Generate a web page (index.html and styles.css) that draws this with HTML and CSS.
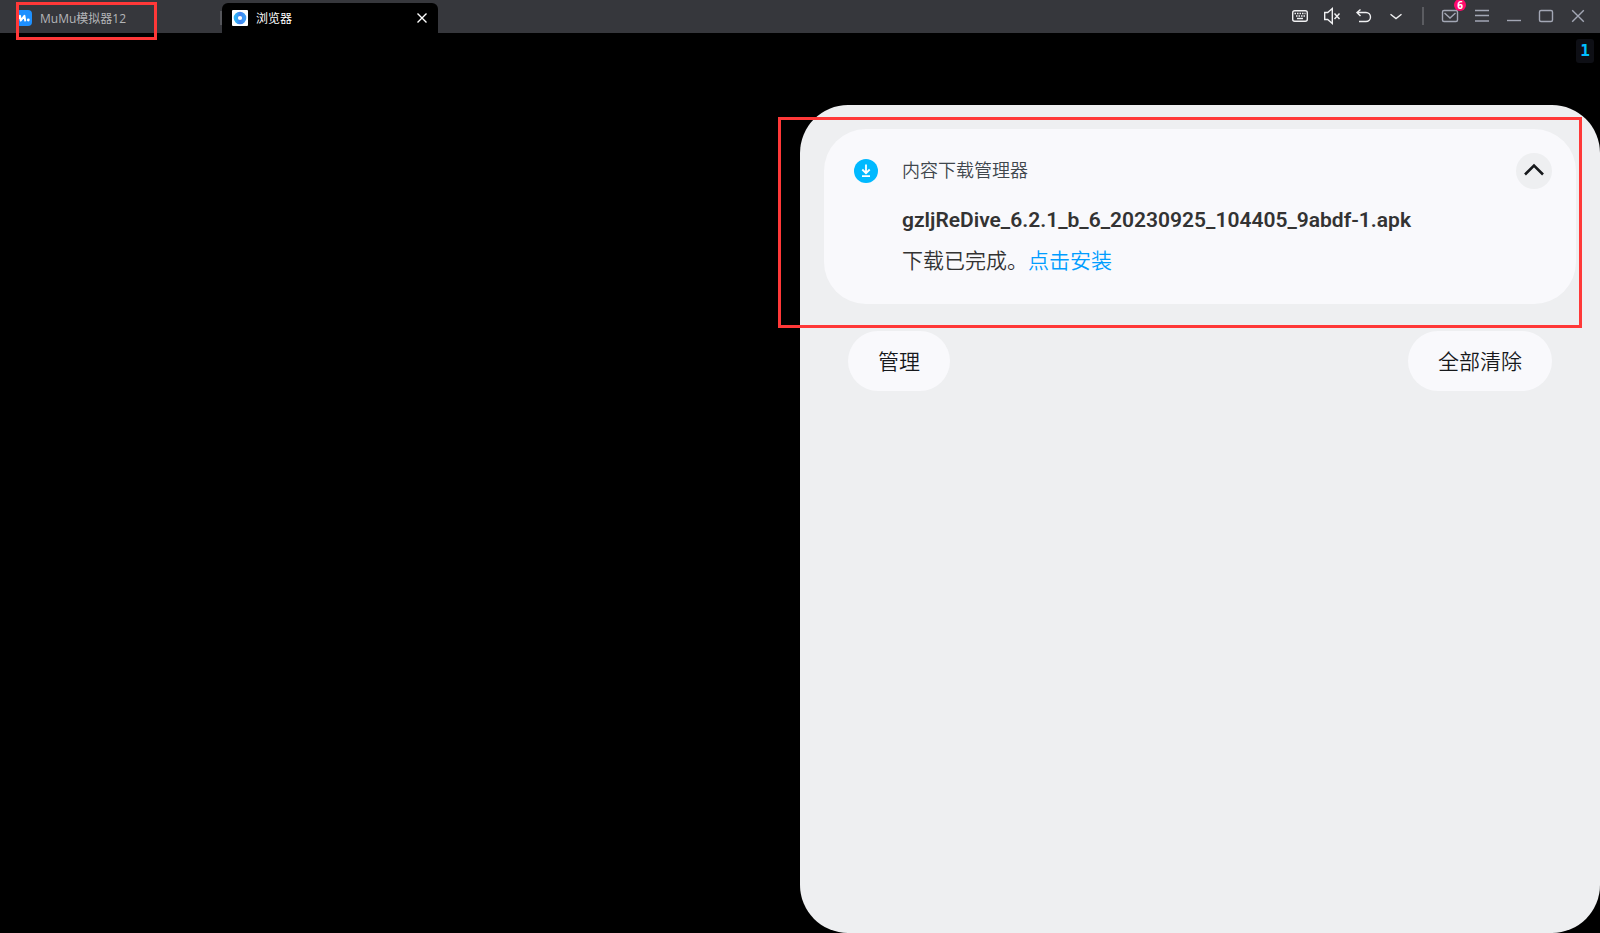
FILE: index.html
```html
<!DOCTYPE html>
<html lang="zh-CN">
<head>
  <meta charset="UTF-8">
  <meta name="viewport" content="width=device-width, initial-scale=1.0">
  <title>MuMu模拟器12</title>
  <link rel="stylesheet" href="styles.css">
</head>
<body>
  <header class="titlebar">
    <nav class="tabs">
      <a class="tab tab-home" href="#">
        <svg class="tab-icon" viewBox="0 0 16 16">
          <rect width="16" height="16" rx="4" fill="#1e90ff"/>
          <path d="M1 10.500 4 5.800l.8 4.700 3.600-4.700.8 4.700" fill="none" stroke="#fff" stroke-width="2" stroke-linejoin="round" stroke-linecap="round"/>
          <circle cx="12.300" cy="10" r="1.400" fill="#fff"/>
        </svg>
        <span>MuMu模拟器12</span>
      </a>
      <div class="tab tab-active">
        <svg class="tab-icon" viewBox="0 0 16 16">
          <defs>
            <linearGradient id="disc" x1="0" y1="0" x2="1" y2="0">
              <stop offset="0" stop-color="#2fb2f5"/>
              <stop offset=".5" stop-color="#4480ee"/>
              <stop offset="1" stop-color="#3f9cf5"/>
            </linearGradient>
          </defs>
          <rect width="16" height="16" rx="1" fill="#fff"/>
          <circle cx="8" cy="8" r="4.200" fill="none" stroke="url(#disc)" stroke-width="4.200"/>
        </svg>
        <span>浏览器</span>
        <button class="tab-close" aria-label="关闭标签">
          <svg viewBox="0 0 10 10"><path d="M.5.5l9 9M9.500.5l-9 9"/></svg>
        </button>
      </div>
    </nav>
    <div class="tools">
      <button class="tool" aria-label="键盘">
        <svg viewBox="0 0 32 32">
          <rect x="8.700" y="10.700" width="14.600" height="10.600" rx="2"/>
          <path d="M10.500 13.500h11M12 16h9" stroke-dasharray="1.500 1"/>
          <path d="M13 18.500h6"/>
        </svg>
      </button>
      <button class="tool" aria-label="静音">
        <svg viewBox="0 0 32 32">
          <path d="M8.700 12.500h3l4.600-4v15l-4.600-4h-3zM18.500 13.500l5 5.500M23.500 13.500l-5 5.500"/>
        </svg>
      </button>
      <button class="tool" aria-label="返回">
        <svg viewBox="0 0 32 32">
          <path d="M12.500 9.500 9 12.500l3.500 3.500M9 12.500h9a4.500 4.500 0 0 1 0 9h-7"/>
        </svg>
      </button>
      <button class="tool" aria-label="更多">
        <svg viewBox="0 0 32 32"><path d="M10.500 14.200l5.500 4.300 5.500-4.300"/></svg>
      </button>
      <span class="divider"></span>
      <button class="tool tool-dim" aria-label="消息">
        <svg viewBox="0 0 32 32">
          <rect x="8.500" y="10.500" width="15" height="11" rx="1.500"/>
          <path d="M10.500 13l5.500 5 5.500-5"/>
        </svg>
        <span class="badge">6</span>
      </button>
      <button class="tool tool-dim" aria-label="菜单">
        <svg viewBox="0 0 32 32"><path d="M9 10.500h14M9 15.500h14M9 21h14"/></svg>
      </button>
      <button class="tool tool-dim" aria-label="最小化">
        <svg viewBox="0 0 32 32"><path d="M9 20.500h14"/></svg>
      </button>
      <button class="tool tool-dim" aria-label="最大化">
        <svg viewBox="0 0 32 32"><rect x="9.500" y="10.500" width="13" height="11" rx="1.500"/></svg>
      </button>
      <button class="tool tool-dim" aria-label="关闭">
        <svg viewBox="0 0 32 32"><path d="M10.200 10.200l11.600 11.600M21.800 10.200L10.200 21.800"/></svg>
      </button>
    </div>
    <div class="mark mark-tab"></div>
  </header>

  <main class="screen">
    <div class="fps">1</div>
    <section class="panel">
      <article class="card">
        <div class="card-head">
          <svg class="card-icon" viewBox="0 0 24 24">
            <circle cx="12" cy="12" r="12" fill="#00b9ff"/>
            <path d="M12 5.500v8.500M8.300 10.500l3.700 3.700 3.700-3.700M8 17.200h8" fill="none" stroke="#fff" stroke-width="1.800"/>
          </svg>
          <span class="card-app">内容下载管理器</span>
          <button class="collapse" aria-label="收起">
            <svg viewBox="0 0 36 36"><path d="M9 21.500l9-9 9 9"/></svg>
          </button>
        </div>
        <h1 class="card-title">gzljReDive_6.2.1_b_6_20230925_104405_9abdf-1.apk</h1>
        <p class="card-text">下载已完成。<a href="#">点击安装</a></p>
      </article>
      <div class="actions">
        <button class="pill">管理</button>
        <button class="pill">全部清除</button>
      </div>
      <div class="mark mark-card"></div>
    </section>
  </main>
</body>
</html>
```

FILE: styles.css
```css
* { box-sizing: border-box; margin: 0; padding: 0; }
body {
  background: #000;
  font-family: Roboto, "Noto Sans CJK SC", sans-serif;
  min-height: 100vh;
  display: flex;
  flex-direction: column;
}
button { border: 0; background: none; font: inherit; color: inherit; cursor: pointer; }
a { text-decoration: none; }
svg { display: block; }

/* title bar */
.titlebar {
  position: relative;
  display: flex;
  justify-content: space-between;
  height: 33px;
  background: #36373c;
  font-family: "Open Sans", "Noto Sans CJK SC", sans-serif;
  font-size: 12px;
}
.tabs { display: flex; align-items: flex-end; }
.tab {
  display: flex;
  align-items: center;
  gap: 8px;
  height: 30px;
}
.tab-home {
  width: 222px;
  padding-left: 16px;
  color: #b4b5b8;
}
.tab-home::after {
  content: "";
  width: 2px;
  height: 14px;
  margin-left: auto;
  background: #55565b;
}
.tab-active {
  width: 216px;
  padding: 0 11px 0 10px;
  background: #000;
  color: #fff;
  border-radius: 6px 6px 0 0;
}
.tab-icon { width: 16px; height: 16px; }
.tab-close { margin-left: auto; }
.tab-close svg { width: 10px; height: 10px; fill: none; stroke: #fff; stroke-width: 1.4; }

.tools { display: flex; padding-right: 6px; color: #f0f0f2; }
.tool { position: relative; width: 32px; height: 32px; }
.tool svg {
  width: 32px;
  height: 32px;
  fill: none;
  stroke: currentColor;
  stroke-width: 1.4;
}
.tool-dim { color: #a3a7b5; }
.divider { width: 2px; height: 18px; margin: 7px 10px; background: #5b5c61; }
.badge {
  position: absolute;
  top: -1px;
  right: 0;
  width: 12px;
  height: 12px;
  border-radius: 6px;
  background: #ff0a6c;
  color: #fff;
  font-size: 10px;
  font-weight: 700;
  line-height: 12px;
}

/* emulator screen */
.screen {
  position: relative;
  flex: 1;
  display: flex;
  justify-content: flex-end;
  padding-top: 72px;
}
.fps {
  position: absolute;
  top: 6px;
  right: 6px;
  width: 18px;
  border-radius: 3px;
  background: #0e0f15;
  color: #00bfff;
  font: 700 16px/24px "DejaVu Sans Mono", monospace;
  text-align: center;
}
.panel {
  position: relative;
  width: 50%;
  padding: 24px;
  border-radius: 48px;
  background: #eeeff1;
}
.card {
  padding: 24px 24px 22px 30px;
  border-radius: 42px;
  background: #f9f9fc;
  color: #333;
}
.card-head { display: flex; align-items: center; gap: 24px; margin-bottom: 11px; }
.card-icon { width: 24px; height: 24px; }
.card-app { font-size: 18px; font-weight: 350; line-height: 26px; color: #40474d; }
.collapse {
  width: 36px;
  height: 36px;
  margin-left: auto;
  border-radius: 50%;
  background: #eeeff1;
}
.collapse svg { fill: none; stroke: #17191c; stroke-width: 2.6; }
.card-title, .card-text {
  padding-left: 48px;
  font-size: 21px;
}
.card-title { font-weight: 600; line-height: 40px; overflow-wrap: anywhere; }
.card-text { font-weight: 350; line-height: 42px; }
.card-text a { color: #009dff; }
.actions {
  display: flex;
  justify-content: space-between;
  margin-top: 27px;
  padding: 0 24px;
}
.pill {
  height: 60px;
  padding: 0 30px 2px;
  border-radius: 30px;
  background: #f9f9fc;
  color: #17191c;
  font-size: 21px;
  font-weight: 350;
}

/* red highlight boxes */
.mark {
  position: absolute;
  border: 3px solid #ff3838;
  pointer-events: none;
}
.mark-tab { top: 2px; left: 16px; width: 141px; height: 38px; z-index: 1; }
.mark-card { top: 12px; left: -22px; right: 18px; height: 211px; }
```
